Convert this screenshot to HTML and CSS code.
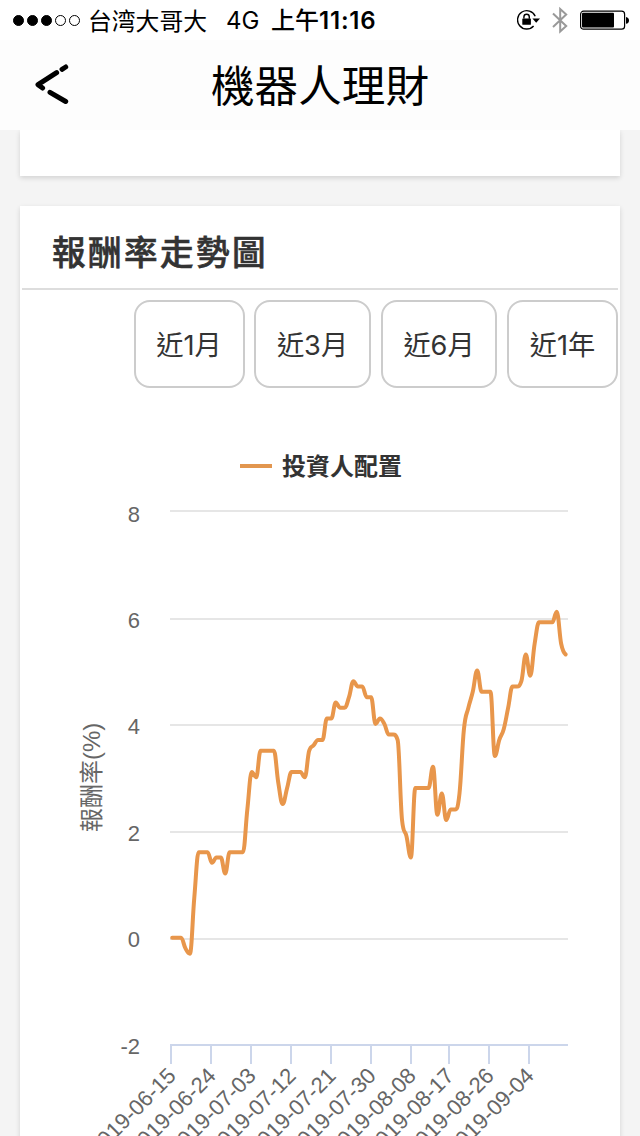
FILE: index.html
```html
<!DOCTYPE html>
<html lang="zh-Hant">

<head>
    <meta charset="UTF-8">
    <meta name="viewport" content="width=device-width, initial-scale=1.0">
    <title>機器人理財</title>
    <link rel="stylesheet" href="styles.css">
</head>

<body>
    <header>
        <div class="status-bar">
            <div class="signal">
                <span class="dot full"></span>
                <span class="dot full"></span>
                <span class="dot full"></span>
                <span class="dot"></span>
                <span class="dot"></span>
            </div>
            <span class="carrier">台湾大哥大</span>
            <span class="network">4G</span>
            <span class="time">上午<b>11:16</b></span>
            <div class="status-icons">
                <svg class="lock-icon" width="24" height="22" viewBox="0 0 24 22">
                    <path d="M18.2 7.2A9.2 9.2 0 1 0 16.6 17" fill="none" stroke="#000" stroke-width="1.4" />
                    <path d="M15.4 9.6H23l-3.8 4.2z" />
                    <path d="M6.9 9.5V7.9a2.7 2.7 0 0 1 5.4 0v1.8" fill="none" stroke="#000" stroke-width="1.4" />
                    <rect x="5.3" y="9.4" width="8.6" height="6.4" rx=".6" />
                </svg>
                <svg class="bluetooth-icon" width="16" height="28" viewBox="0 0 16 28">
                    <path d="M1 7.6L14.2 20 8.2 25.4V3l6 5.5L1 21" fill="none" stroke="#999" stroke-width="2" />
                </svg>
                <svg class="battery-icon" width="50" height="20" viewBox="0 0 50 20">
                    <rect x=".6" y="1.2" width="44" height="18" rx="3" fill="none" stroke="#000" stroke-width="1.2" />
                    <rect x="2" y="2.8" width="32" height="14.8" rx="1" />
                    <path d="M46 7q3 .6 3 3.4t-3 3.4z" />
                </svg>
            </div>
        </div>
        <nav>
            <svg class="back" width="36" height="44" viewBox="0 0 36 44">
                <path d="M32.7 4L29 6.3M23.6 9.7L5 21.7l4.6 3.4M17 29.3l15.7 9.2" />
            </svg>
            <h1>機器人理財</h1>
        </nav>
    </header>

    <main>
        <section class="card previous"></section>

        <section class="card">
            <h2>報酬率走勢圖</h2>
            <div class="ranges">
                <button type="button">近1月</button>
                <button type="button">近3月</button>
                <button type="button">近6月</button>
                <button type="button">近1年</button>
            </div>
            <svg class="chart" width="600" height="760" viewBox="0 0 600 760">
                <line class="legend-line" x1="220" y1="78" x2="252" y2="78" />
                <text class="legend-text" x="262" y="86.6">投資人配置</text>
                <text class="axis-title" transform="translate(80 444) rotate(-90)">報酬率(%)</text>
                <g id="grid"></g>
                <g id="xAxis"></g>
                <path id="series" />
            </svg>
        </section>
    </main>

    <script src="chart.js"></script>
</body>

</html>
```
FILE: styles.css
```css
body {
    font-family: 'Inter', 'Noto Sans CJK TC', sans-serif;
    background-color: #f4f4f4;
    color: #333;
    margin: 0;
    height: 1136px;
    overflow: hidden;
}

header {
    position: relative;
    height: 130px;
    background-color: #fdfdfd;
    color: #000;
}

.status-bar {
    display: flex;
    align-items: center;
    height: 40px;
    padding: 0 10px 0 13px;
    font-size: 24px;
    line-height: 40px;
    background-color: #fff;
    white-space: nowrap;
}

.signal {
    display: flex;
    gap: 3px;
    width: 75px;
}

.dot {
    width: 11px;
    height: 11px;
    box-sizing: border-box;
    border: 1px solid #000;
    border-radius: 50%;
}

.full {
    background-color: #000;
}

.carrier {
    width: 138px;
    font-family: 'Noto Sans CJK TC', sans-serif;
    font-size: 23.8px;
}

.network {
    width: 45px;
    padding-top: 2px;
}

.time {
    padding-top: 2px;
    font-weight: 500;
}

.time b {
    font-weight: 600;
    letter-spacing: 0.8px;
}

.status-icons {
    display: flex;
    align-items: center;
    margin-left: auto;
}

.bluetooth-icon {
    margin: 0 12px 0 11px;
}

nav {
    display: flex;
    align-items: center;
    height: 90px;
    padding: 0 33px;
}

.back {
    fill: none;
    stroke: #000;
    stroke-width: 5;
    stroke-linecap: round;
    stroke-linejoin: round;
}

h1 {
    flex: 1;
    margin: 0 36px 0 0;
    padding-top: 4px;
    font-size: 43.6px;
    font-weight: 400;
    line-height: 86px;
    text-align: center;
}

main {
    padding: 0 20px;
}

.card {
    background-color: #fff;
    box-shadow: 0 2px 5px rgba(0, 0, 0, 0.14);
}

.previous {
    height: 46px;
    margin-bottom: 30px;
}

h2 {
    height: 82px;
    margin: 0 2px;
    padding-left: 30px;
    border-bottom: 2px solid #ddd;
    font-size: 33.6px;
    font-weight: 500;
    letter-spacing: 2.4px;
    line-height: 94px;
    -webkit-text-stroke: 0.6px #333;
}

.ranges {
    display: grid;
    grid-template-columns: 111px 117px 116px 111px;
    justify-content: end;
    gap: 10px;
    padding: 10px 2px 0 0;
}

button {
    height: 88px;
    padding: 0 0 2px;
    border: 2px solid #ccc;
    border-radius: 16px;
    background-color: #fff;
    color: #333;
    font-family: inherit;
    font-size: 27.2px;
    white-space: nowrap;
}

button:first-child {
    margin: 0 -1px 0 1px;
    padding-right: 1px;
}

.chart {
    display: block;
    font-family: 'Liberation Sans', 'Noto Sans CJK TC', sans-serif;
    font-size: 22px;
    fill: #666;
}

.legend-line {
    stroke: #e2964f;
    stroke-width: 4;
}

.legend-text {
    font-size: 24px;
    font-weight: bold;
    fill: #333;
}

.axis-title {
    font-size: 24px;
}

.grid-line {
    stroke: #e6e6e6;
    stroke-width: 2;
}

.axis-line {
    stroke: #ccd6eb;
    stroke-width: 2;
}

#series {
    fill: none;
    stroke: #e8964b;
    stroke-width: 4;
    stroke-linecap: round;
    stroke-linejoin: round;
}
```
FILE: chart.js
```javascript
const values = [
    0, 0, 0, -0.2, -0.3, 0.75, 1.6, 1.6, 1.6, 1.4, 1.5, 1.5, 1.2, 1.6, 1.6, 1.6, 1.6, 2.4,
    3.1, 3.0, 3.5, 3.5, 3.5, 3.5, 2.9, 2.5, 2.8, 3.1, 3.1, 3.1, 3.0, 3.5, 3.6, 3.7, 3.7, 4.1,
    4.1, 4.4, 4.3, 4.3, 4.5, 4.8, 4.7, 4.7, 4.5, 4.5, 4.0, 4.1, 4.0, 3.8, 3.8, 3.7, 2.2, 1.9,
    1.5, 2.8, 2.8, 2.8, 2.8, 3.2, 2.3, 2.7, 2.2, 2.4, 2.4, 2.7, 3.9, 4.3, 4.6, 5.0, 4.6, 4.6,
    4.6, 3.4, 3.7, 3.9, 4.3, 4.7, 4.7, 4.8, 5.3, 4.9, 5.5, 5.9, 5.9, 5.9, 5.9, 6.1, 5.5, 5.3
];
const ticks = [
    [151, '2019-06-15'], [191, '2019-06-24'], [231, '2019-07-03'], [271, '2019-07-12'],
    [311, '2019-07-21'], [351, '2019-07-30'], [391, '2019-08-08'], [429, '2019-08-17'],
    [469, '2019-08-26'], [509, '2019-09-04']
];

// Horizontal lines and the value labels
let grid = '';
[8, 6, 4, 2, 0, -2].forEach((value, i) => {
    const y = [123, 231, 337, 444, 551, 657][i];
    const name = value === -2 ? 'axis-line' : 'grid-line';
    grid += `<line class="${name}" x1="150" y1="${y}" x2="548" y2="${y}" />`;
    grid += `<text x="120" y="${133.6 + i * 106.4}" text-anchor="end">${value}</text>`;
});
document.getElementById('grid').innerHTML = grid;

// Date ticks
let dates = '';
ticks.forEach(([x, date]) => {
    dates += `<line class="axis-line" x1="${x}" y1="657" x2="${x}" y2="676" />`;
    dates += `<text transform="translate(${x + 6.2} 689.2) rotate(-45)" text-anchor="end">${date}</text>`;
});
document.getElementById('xAxis').innerHTML = dates;

// Smooth line through the points, without overshooting at the peaks
const points = values.map((value, i) => ({ x: 152.2 + i * 4.42, y: 549.7 - value * 53.45 }));

function controls(last, point, next) {
    const left = { x: (1.5 * point.x + last.x) / 2.5, y: (1.5 * point.y + last.y) / 2.5 };
    const right = { x: (1.5 * point.x + next.x) / 2.5, y: (1.5 * point.y + next.y) / 2.5 };
    const correction = (right.y - left.y) * (right.x - point.x) / (right.x - left.x) + point.y - right.y;
    left.y += correction;
    right.y += correction;

    const leftY = Math.min(Math.max(left.y, Math.min(last.y, point.y)), Math.max(last.y, point.y));
    if (leftY !== left.y) {
        left.y = leftY;
        right.y = 2 * point.y - leftY;
    }
    const rightY = Math.min(Math.max(right.y, Math.min(next.y, point.y)), Math.max(next.y, point.y));
    if (rightY !== right.y) {
        right.y = rightY;
        left.y = 2 * point.y - rightY;
    }
    return { left, right };
}

let path = `M${points[0].x} ${points[0].y}`;
let previous = points[0];
for (let i = 1; i < points.length; i++) {
    const point = points[i];
    const next = points[i + 1];
    const { left, right } = next ? controls(points[i - 1], point, next) : { left: point, right: point };
    path += `C${previous.x} ${previous.y} ${left.x} ${left.y} ${point.x} ${point.y}`;
    previous = right;
}
document.getElementById('series').setAttribute('d', path);
```
